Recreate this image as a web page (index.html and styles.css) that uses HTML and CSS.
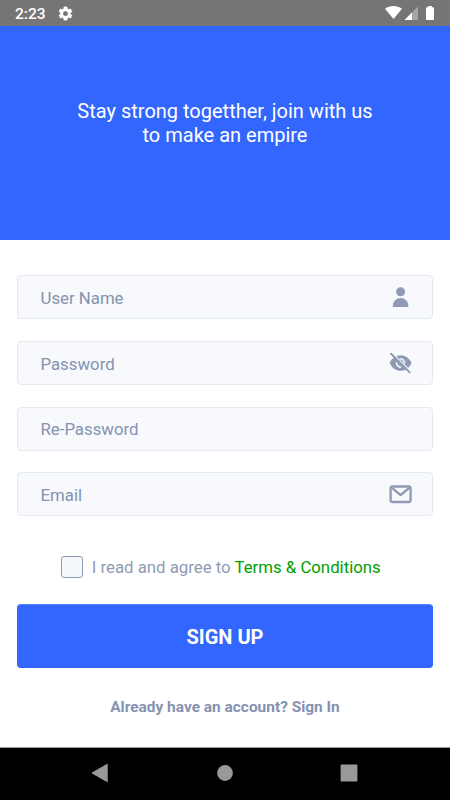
FILE: index.html
```
<!DOCTYPE html>
<html lang="en">
<head>
  <meta charset="UTF-8" />
  <meta name="viewport" content="width=device-width, initial-scale=1" />
  <title>Sign Up</title>
  <link rel="stylesheet" href="styles.css">
</head>
<body>
  <div class="screen">
    <!-- Status bar -->
    <div class="status-bar">
      <span class="clock">2:23</span>
      <svg class="gear" width="17" height="17" viewBox="0 0 24 24" fill="#fff">
        <path d="M19.14 12.94c.04-.3.06-.61.06-.94s-.02-.64-.07-.94l2.03-1.58a.5.5 0 0 0 .12-.61l-1.92-3.32a.49.49 0 0 0-.59-.22l-2.39.96a7 7 0 0 0-1.62-.94l-.36-2.54A.48.48 0 0 0 13.92 2.4h-3.84a.47.47 0 0 0-.47.41l-.36 2.54c-.59.24-1.13.57-1.62.94l-2.39-.96a.48.48 0 0 0-.59.22L2.74 8.87a.48.48 0 0 0 .12.61l2.03 1.58c-.05.3-.09.63-.09.94s.02.64.07.94l-2.03 1.58a.5.5 0 0 0-.12.61l1.92 3.32c.12.22.37.29.59.22l2.39-.96c.5.38 1.03.7 1.62.94l.36 2.54c.05.24.24.41.48.41h3.84c.24 0 .44-.17.47-.41l.36-2.54c.59-.24 1.13-.56 1.62-.94l2.39.96c.22.08.47 0 .59-.22l1.92-3.32a.47.47 0 0 0-.12-.61zM12 15.6A3.6 3.6 0 1 1 12 8.4a3.6 3.6 0 0 1 0 7.2z" stroke="#fff" stroke-width=".4"/>
      </svg>
      <svg class="signals" width="52" height="16" viewBox="0 0 52 16">
        <path d="M0 3.800C2.500 2 5.400 1 8.500 1s6 1 8.500 2.800L8.500 14z" fill="#fff"/>
        <path d="M33 1.500V15H19.500z" fill="#a6a6a6"/>
        <path d="M27 7.500V15h-7.500z" fill="#fff"/>
        <path d="M43.200 1h3.600v1.300h1.400q.8 0 .8.800v11.100q0 .8-.8.800h-6.400q-.8 0-.8-.8V3.100q0-.8.800-.8h1.400z" fill="#fff"/>
      </svg>
    </div>

    <!-- Header -->
    <div class="header">
      <p class="slogan">Stay strong togetther, join with us<br>to make an empire</p>
    </div>

    <!-- Sign up form -->
    <form class="form">
      <div class="field">
        <span class="label">User Name</span>
        <svg width="24" height="24" viewBox="0 0 24 24" fill="#8f9bb3">
          <circle cx="11.600" cy="6.800" r="4.500"/>
          <path d="M3.900 22v-1.500a7.700 7.500 0 0 1 15.400 0V22z"/>
        </svg>
      </div>
      <div class="field">
        <span class="label">Password</span>
        <svg width="24" height="24" viewBox="0 0 24 24">
          <path d="M.7 12C2.800 7 7 4.200 11.600 4.200S20.400 7 22.500 12c-2.100 5-6.300 7.800-10.900 7.800S2.800 17 .7 12z" fill="#8f9bb3"/>
          <path d="M11.200 7.900a4.100 4.100 0 0 1 4.300 4.600M7.600 11.500a4.100 4.100 0 0 0 4.300 4.600" fill="none" stroke="#f7f9fc" stroke-width="1.600"/>
          <path d="M3.300 2L22 20.700" stroke="#f7f9fc" stroke-width="1.200"/>
          <path d="M2 2.700L20.700 21.400" stroke="#8f9bb3" stroke-width="2" stroke-linecap="round"/>
        </svg>
      </div>
      <div class="field">
        <span class="label">Re-Password</span>
      </div>
      <div class="field">
        <span class="label">Email</span>
        <svg width="24" height="24" viewBox="0 0 24 24" fill="none" stroke="#8f9bb3" stroke-width="2.300" stroke-linejoin="round">
          <rect x="1.600" y="4.500" width="20" height="15.500" rx="2"/>
          <path d="M2.300 5.300L11.600 13l9.300-7.700"/>
        </svg>
      </div>

      <div class="terms">
        <span class="checkbox"></span>
        <span class="terms-text">I read and agree to <a class="terms-link">Terms &amp; Conditions</a></span>
      </div>

      <button class="signup-btn" type="button">SIGN UP</button>
      <div class="signin">Already have an account? Sign In</div>
    </form>

    <!-- Android navigation -->
    <div class="nav-bar">
      <svg width="18" height="20" viewBox="0 0 18 20"><path d="M1 10L16.200 1.300v17.400z" fill="#999" stroke="#999" stroke-linejoin="round"/></svg>
      <svg width="18" height="20" viewBox="0 0 18 20"><circle cx="9" cy="10" r="7.900" fill="#999"/></svg>
      <svg width="18" height="20" viewBox="0 0 18 20"><rect x=".6" y="1.600" width="16.800" height="16.800" rx="1" fill="#999"/></svg>
    </div>
  </div>
</body>
</html>
```
FILE: styles.css
```
* {
  box-sizing: border-box;
}
body {
  margin: 0;
  font-family: Roboto, sans-serif;
  background: #fff;
}
.screen {
  display: flex;
  flex-direction: column;
  width: 450px;
  height: 800px;
  overflow: hidden;
}
/* Status bar */
.status-bar {
  display: flex;
  align-items: center;
  height: 26px;
  padding: 0 13px 0 15px;
  background: #757575;
  color: #fff;
}
.clock {
  width: 42px;
  font-size: 15.500px;
  font-weight: 500;
  line-height: 26px;
  padding-top: 1px;
}
.signals {
  margin-left: auto;
}
/* Header */
.header {
  height: 214px;
  padding-top: 74px;
  background: #3366ff;
}
.slogan {
  margin: 0;
  color: #fff;
  font-size: 20px;
  line-height: 23.500px;
  text-align: center;
}
/* Form */
.form {
  flex: 1;
  padding: 35.300px 17px 0;
}
.field {
  display: flex;
  align-items: center;
  justify-content: space-between;
  height: 44px;
  margin-bottom: 21.700px;
  padding: 0 19px 0 22.500px;
  border: 1px solid #e4e9f2;
  border-radius: 4px;
  background: #f7f9fc;
}
.label {
  padding-top: 1.400px;
  color: #8592b0;
  font-size: 16.800px;
}
/* Terms row */
.terms {
  display: flex;
  align-items: center;
  justify-content: center;
  height: 24px;
  margin-top: 39px;
  padding-right: 8px;
}
.checkbox {
  width: 22px;
  height: 22px;
  margin-right: 8.500px;
  border: 1px solid #8f9bb3;
  border-radius: 3px;
  background: #f5f8fa;
}
.terms-text {
  color: #8f9bb3;
  font-size: 16.800px;
}
.terms-link {
  color: #00a000;
}
.signup-btn {
  display: block;
  width: 100%;
  height: 64px;
  margin-top: 25px;
  padding: 2px 0 0;
  border: 1px solid #3366ff;
  border-top-color: #5580ff;
  border-radius: 4px;
  background: #3366ff;
  color: #fff;
  font-family: inherit;
  font-size: 20px;
  font-weight: 700;
}
.signin {
  margin-top: 29px;
  color: #8592b0;
  font-size: 15.450px;
  font-weight: 700;
  line-height: 20px;
  text-align: center;
}
/* Navigation bar */
.nav-bar {
  display: flex;
  align-items: center;
  justify-content: space-between;
  height: 53px;
  padding: 0 92px 2px 91px;
  border-top: 1px solid #999;
  background: #000;
}
```
